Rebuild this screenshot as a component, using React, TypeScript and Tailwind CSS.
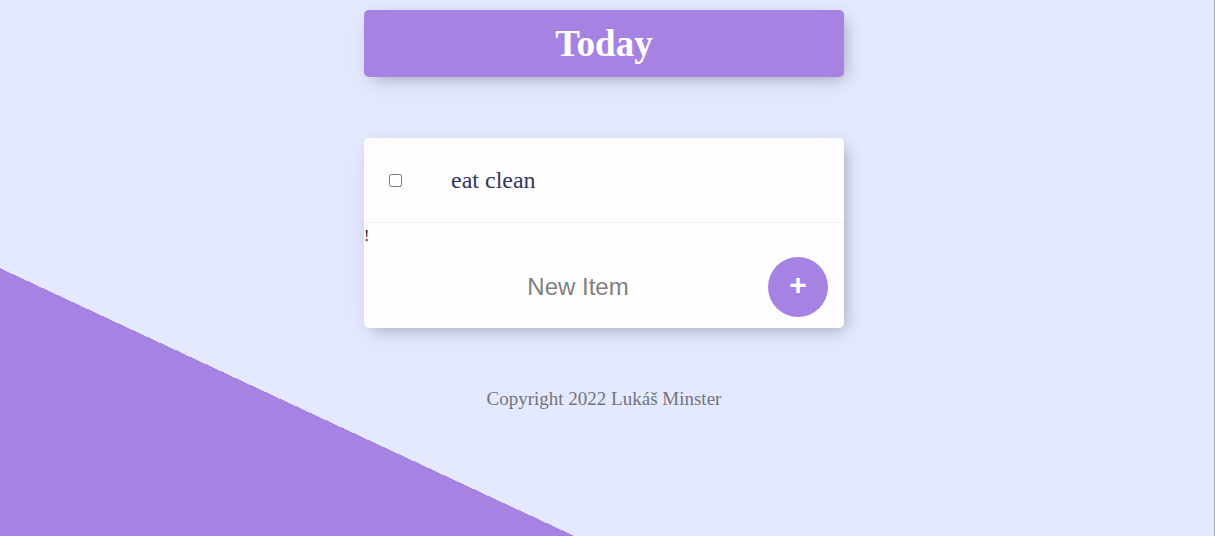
import React, { useState } from 'react';

const App: React.FC = () => {
  const [items, setItems] = useState<{ id: number; text: string; done: boolean }[]>([
    { id: 1, text: 'eat clean', done: false },
  ]);
  const [draft, setDraft] = useState('');

  const addItem = (e: React.FormEvent) => {
    e.preventDefault();
    if (!draft.trim()) return;
    setItems([...items, { id: Date.now(), text: draft.trim(), done: false }]);
    setDraft('');
  };

  return (
    <div className="min-h-screen w-full pr-[6px] border-r border-[#a3a6c4] bg-[#E4E9FD] bg-[linear-gradient(25deg,#A683E3_24.3%,#E4E9FD_24.3%)] flex flex-col items-center font-['Liberation_Serif','Times_New_Roman',serif]">
      {/* Heading */}
      <div className="mt-[10px] w-[480px] h-[67px] rounded-[5px] bg-[#A683E3] flex items-center justify-center shadow-[5px_5px_15px_-5px_rgba(0,0,0,0.3),0_8px_30px_rgba(90,100,170,0.07)]">
        <h1 className="text-white text-[37px] font-bold leading-none">Today</h1>
      </div>

      {/* List box */}
      <div className="mt-[61px] w-[480px] rounded-[5px] bg-[#fdfdfe] shadow-[5px_5px_15px_-5px_rgba(0,0,0,0.3),0_8px_30px_rgba(90,100,170,0.07)]">
        {items.map((item) => (
          <div key={item.id} className="h-[85px] flex items-center border-b border-[#F1F1F1]">
            <input
              type="checkbox"
              checked={item.done}
              onChange={() =>
                setItems(items.map((i) => (i.id === item.id ? { ...i, done: !i.done } : i)))
              }
              className="ml-[25px] w-[13px] h-[13px] accent-[#A683E3]"
            />
            <p
              className={`ml-[49px] text-[24px] leading-none text-[#34365c] ${
                item.done ? 'line-through decoration-[#A683E3]' : ''
              }`}
            >
              {item.text}
            </p>
          </div>
        ))}
        <div className="mt-[4px] text-[16px] leading-[18px] text-[#222]">!</div>
        <form onSubmit={addItem} className="flex items-center pt-[12px] pb-[11px]">
          <input
            type="text"
            value={draft}
            onChange={(e) => setDraft(e.target.value)}
            placeholder="New Item"
            autoComplete="off"
            className="ml-[20px] pl-[4px] flex-1 min-w-0 h-[60px] text-center text-[24px] font-['Liberation_Sans',Arial,sans-serif] bg-transparent outline-none placeholder:text-[#808080] focus:shadow-[inset_0_-3px_0_0_#A683E3]"
          />
          <button
            type="submit"
            className="mr-[16px] w-[60px] h-[60px] shrink-0 rounded-full bg-[#A683E3] text-white text-[30px] font-bold leading-none pb-[4px] font-['Liberation_Sans',Arial,sans-serif] flex items-center justify-center"
          >
            +
          </button>
        </form>
      </div>

      <footer className="mt-[60px] text-[19px] leading-[22px] text-[#72747e] text-center">
        Copyright 2022 Lukáš Minster
      </footer>
    </div>
  );
};

export default App;
